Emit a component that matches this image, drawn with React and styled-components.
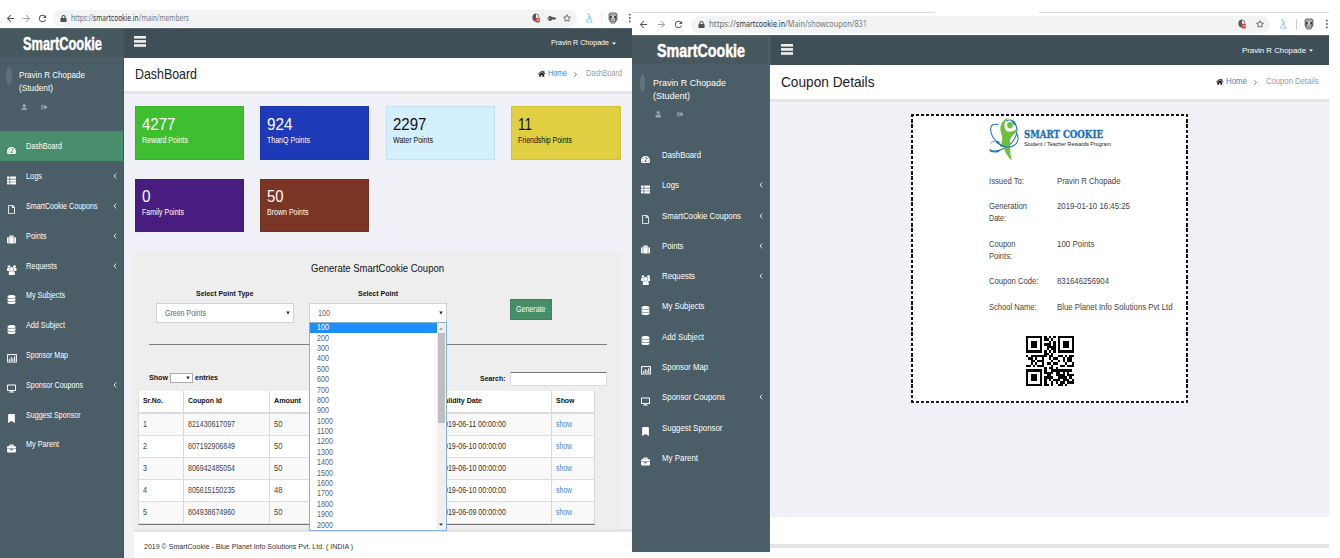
import React, { useLayoutEffect, useRef, useState } from "react";
import styled, { createGlobalStyle } from "styled-components";
import {
  FaTachometerAlt, FaThList, FaRegFile, FaSuitcase, FaDatabase,
  FaDesktop, FaBookmark, FaBriefcase, FaUser, FaSignOutAlt, FaHome, FaLock, FaKey, FaRegStar,
} from "react-icons/fa";
import { MdArrowBack, MdArrowForward, MdRefresh } from "react-icons/md";

const Global = createGlobalStyle`
  *, *::before, *::after { box-sizing: border-box; }
  body { margin: 0; background: #fff; font-family: "Liberation Sans", Arial, sans-serif; overflow: hidden; }
  svg { display: block; }
`;

/* ---------- text set to a given width ---------- */
const FitBox = styled.span`
  display: block;
  flex: none;
  width: ${(p) => p.$w}px;
  height: ${(p) => p.$lh}px;
  line-height: ${(p) => p.$lh}px;
  font-size: ${(p) => p.$size}px;
  font-weight: ${(p) => (p.$bold ? 700 : 400)};
  font-family: ${(p) => p.$font || "inherit"};
  color: ${(p) => p.$color || "inherit"};
  -webkit-text-stroke: ${(p) => p.$stroke || 0}px currentColor;
  white-space: nowrap;
`;
const FitInner = styled.span`
  display: inline-block;
  transform-origin: 0 50%;
`;
function Fit({ w, size = 8.5, lh = 12, bold, color, font, stroke, children }) {
  const ref = useRef(null);
  const [scale, setScale] = useState(1);
  useLayoutEffect(() => {
    setScale(w / ref.current.getBoundingClientRect().width);
  }, []);
  return (
    <FitBox $w={w} $size={size} $lh={lh} $bold={bold} $color={color} $font={font} $stroke={stroke}>
      <FitInner ref={ref} style={{ transform: `scaleX(${scale})` }}>{children}</FitInner>
    </FitBox>
  );
}

/* ---------- page frame ---------- */
const Page = styled.div`
  display: flex;
  width: 1340px;
  height: 558px;
  background: #fff;
`;
const LeftWindow = styled.section`
  width: 632px;
  height: 558px;
  padding-top: 8px;
  display: flex;
  flex-direction: column;
`;
const RightWindow = styled.section`
  width: 697px;
  height: 558px;
  padding-top: 12px;
  display: flex;
  flex-direction: column;
`;
const Columns = styled.div`
  display: flex;
  height: ${(p) => p.$h}px;
`;

/* ---------- browser toolbar ---------- */
const TabEdge = styled.div`
  display: flex;
  justify-content: space-between;
  height: 1px;
`;
const TabLine = styled.i`
  width: ${(p) => p.$w}px;
  background: #d9dbe4;
`;
const Toolbar = styled.div`
  display: flex;
  align-items: center;
  height: ${(p) => p.$h}px;
  padding-left: ${(p) => p.$pad}px;
  color: #50545a;
`;
const NavIcons = styled.div`
  display: flex;
  gap: ${(p) => p.$gap}px;
  width: ${(p) => p.$w}px;
  font-size: 11px;
`;
const Address = styled.div`
  display: flex;
  align-items: center;
  width: ${(p) => p.$w}px;
  height: 17px;
  padding: 0 6px 0 7px;
  border-radius: 9px;
  background: #f1f3f4;
  color: #4b4f54;
`;
const Url = styled.div`
  display: flex;
  margin-left: ${(p) => p.$ml}px;
  margin-right: auto;
`;
const AddressIcons = styled.div`
  display: flex;
  align-items: center;
  gap: ${(p) => p.$gap}px;
`;
const KeyIcon = styled(FaKey)`
  font-size: 7px;
  transform: rotate(-135deg);
`;
const ToolIcons = styled.div`
  display: flex;
  align-items: center;
  margin-left: ${(p) => p.$ml}px;
`;
const Divider = styled.i`
  width: 1px;
  height: 11px;
  margin: 0 ${(p) => p.$mr}px 0 ${(p) => p.$ml}px;
  background: ${(p) => p.$color};
`;

const CookieBlocked = () => (
  <svg width="8" height="10" viewBox="0 0 8 10">
    <path d="M4 .5A3.6 4 0 0 0 4 8.5Z" fill="#56595d" />
    <path d="M3.8.8A3.2 3.8 0 0 1 7 4.5" fill="none" stroke="#777" />
    <rect x="3.6" y="4.8" width="4.2" height="4.6" rx="1" fill="#d8423c" />
    <path d="M4.6 7H7" stroke="#fff" strokeWidth=".8" />
  </svg>
);
const Swirl = () => (
  <svg width="8" height="10" viewBox="0 0 8 10" fill="none">
    <path d="M2 .8C4.6 1 6 4 4.8 6.4" stroke="#7ba7c6" strokeWidth="1" />
    <path d="M3 3C4.6 4 4 6 1 8.6M1.6 9.2H7" stroke="#93d6e6" strokeWidth="1.1" />
    <path d="M5 6.3L7.4 8.8" stroke="#a9c3d6" strokeWidth="1.1" />
  </svg>
);
const Profile = () => (
  <svg width="10" height="12" viewBox="0 0 10 12">
    <path d="M.6 2L2.2.6H7.8L9.4 2V7.6L7 11.6H3L.6 7.6Z" fill="#6d716c" />
    <path d="M2.4 1.6H7.6L8.4 4.4H1.6Z" fill="#a6aaa3" />
    <path d="M3.7 3.4H6.3L6.9 9.8Q5 12 3.1 9.8Z" fill="#cfd2cb" />
    <circle cx="2.9" cy="5" r="1" fill="#2b2e2c" />
    <circle cx="7.1" cy="5" r="1" fill="#2b2e2c" />
    <path d="M3.8 9.4H6.2M5 6.8V8.2" stroke="#444" strokeWidth=".9" />
  </svg>
);
const Dots = () => (
  <svg width="2" height="10" viewBox="0 0 2 10" fill="#4c4f53">
    <rect y="0.8" width="1.6" height="1.6" /><rect y="4.2" width="1.6" height="1.6" /><rect y="7.6" width="1.6" height="1.6" />
  </svg>
);

/* ---------- sidebar ---------- */
const Sidebar = styled.aside`
  flex: none;
  width: ${(p) => p.$w}px;
  background: #4b5d66;
  color: #fff;
  border-right: 1px solid ${(p) => p.$edge};
`;
const Brand = styled.div`
  height: ${(p) => p.$h}px;
  padding: ${(p) => p.$pad};
  background: #47585f;
  border-top: 1px solid #5c6b72;
  border-bottom: 1px solid #4e6068;
`;
const UserBlock = styled.div`
  display: flex;
  height: ${(p) => p.$h}px;
  padding: ${(p) => p.$pad};
`;
const Avatar = styled.i`
  width: 5.5px;
  height: 18px;
  margin-right: ${(p) => p.$mr}px;
  border-radius: 50%;
  background: #62727a;
`;
const UserText = styled.div`
  padding-top: 2px;
`;
const UserLinks = styled.div`
  display: flex;
  gap: ${(p) => p.$gap}px;
  margin: 8.5px 0 0 1.5px;
  font-size: 6.5px;
  color: #9ba3a7;
`;
const Item = styled.div`
  display: flex;
  align-items: center;
  height: ${(p) => p.$h}px;
  padding-left: ${(p) => p.$pad}px;
  padding-right: 6px;
  border-top: 1px solid ${(p) => (p.$active ? "#478d6b" : "#4f616a")};
  background: ${(p) => (p.$active ? "#488e6c" : "transparent")};
`;
const ItemIcon = styled.span`
  width: ${(p) => p.$w}px;
  padding-top: 8px;
  font-size: 9px;
`;
const Chevron = styled.svg`
  margin-left: auto;
`;
const GroupIcon = () => (
  <svg width="9.5" height="10" viewBox="0 0 19 20" fill="currentColor">
    <circle cx="4" cy="3.2" r="2.8" />
    <circle cx="15" cy="3.2" r="2.8" />
    <path d="M0 7Q0 6 2 6H6L5 9L7 12H1.5Q0 12 0 10Z" />
    <path d="M19 7Q19 6 17 6H13L14 9L12 12H17.5Q19 12 19 10Z" />
    <circle cx="9.5" cy="8" r="3.8" />
    <path d="M3.5 19V15Q3.5 12 7 11.8Q9.5 13.6 12 11.8Q15.5 12 15.5 15V19Q15 20 14 20H5Q4 20 3.5 19Z" />
  </svg>
);
const ChartIcon = () => (
  <svg width="10" height="9" viewBox="0 0 10 9">
    <rect x=".6" y=".6" width="8.8" height="7.4" fill="none" stroke="currentColor" strokeWidth="1" />
    <path d="M2.6 7V5M4.3 7V3M6 7V4.2M7.7 7V2.2" stroke="currentColor" strokeWidth="1" />
  </svg>
);

const MENU = [
  ["DashBoard", FaTachometerAlt, 36, 39],
  ["Logs", FaThList, 16, 17, true],
  ["SmartCookie Coupons", FaRegFile, 71.5, 79, true],
  ["Points", FaSuitcase, 20.5, 21.5, true],
  ["Requests", GroupIcon, 31, 33, true],
  ["My Subjects", FaDatabase, 39, 42.5],
  ["Add Subject", FaDatabase, 39, 42],
  ["Sponsor Map", ChartIcon, 42, 46],
  ["Sponsor Coupons", FaDesktop, 57, 63, true],
  ["Suggest Sponsor", FaBookmark, 54.5, 60.5],
  ["My Parent", FaBriefcase, 33, 36],
];

function Menu({ wide }) {
  return MENU.map(([label, Icon, w1, w2, sub], i) => (
    <Item key={label} $h={wide ? 30.27 : 29.8} $pad={wide ? 8.5 : 7} $active={!wide && i === 0}>
      <ItemIcon $w={wide ? 21 : 19}><Icon /></ItemIcon>
      <Fit w={wide ? w2 : w1} size={8.7}>{label}</Fit>
      {sub && (
        <Chevron width="4" height="6" viewBox="0 0 4 6"><path d="M3.2.6L1 3L3.2 5.4" fill="none" stroke="#e4e8ea" /></Chevron>
      )}
    </Item>
  ));
}

/* ---------- header + title ---------- */
const Main = styled.main`
  flex: 1;
  min-width: 0;
  display: flex;
  flex-direction: column;
  background: #f0f1f6;
`;
const TopBar = styled.div`
  display: flex;
  align-items: center;
  justify-content: space-between;
  height: ${(p) => p.$h}px;
  padding: 0 16px 0 ${(p) => p.$pad}px;
  background: #404f57;
  border-top: 1px solid #56646b;
  color: #fff;
`;
const Account = styled.div`
  display: flex;
  align-items: center;
  gap: 3px;
`;
const TitleBar = styled.div`
  display: flex;
  align-items: center;
  justify-content: space-between;
  height: ${(p) => p.$h}px;
  padding: ${(p) => p.$pad};
  background: #fff;
  border-bottom: 3px solid #e5e6e7;
  color: #222;
`;
const Crumbs = styled.div`
  display: flex;
  align-items: center;
  font-size: 7.5px;
`;
const CrumbArrow = styled.svg`
  margin: 0 9px 0 7px;
`;
const BurgerIcon = styled.svg`
  margin-bottom: 3px;
`;
const Burger = () => (
  <BurgerIcon width="12" height="11" viewBox="0 0 12 11" fill="#eef0f1">
    <rect width="12" height="2.6" y="0" /><rect width="12" height="2.6" y="4.1" /><rect width="12" height="2.6" y="8.2" />
  </BurgerIcon>
);
function Header({ h, pad, nameW, titleH, titlePad, title, titleW, crumb, crumbW, homeW }) {
  return (
    <>
      <TopBar $h={h} $pad={pad}>
        <Burger />
        <Account>
          <Fit w={nameW} size={8}>Pravin R Chopade</Fit>
          <svg width="4" height="3" viewBox="0 0 4 3"><path d="M0 .5H4L2 2.7Z" fill="#fff" /></svg>
        </Account>
      </TopBar>
      <TitleBar $h={titleH} $pad={titlePad}>
        <Fit w={titleW} size={14.5} lh={18}>{title}</Fit>
        <Crumbs>
          <FaHome />
          &nbsp;
          <Fit w={homeW} size={8.2} color="#4a84c4">Home</Fit>
          <CrumbArrow width="3" height="5" viewBox="0 0 3 5"><path d="M.5.5L2.5 2.5L.5 4.5" fill="none" stroke="#777" /></CrumbArrow>
          <Fit w={crumbW} size={8.2} color="#999">{crumb}</Fit>
        </Crumbs>
      </TitleBar>
    </>
  );
}

/* ---------- dashboard ---------- */
const Cards = styled.div`
  display: grid;
  grid-template-columns: repeat(4, 109.3px);
  column-gap: 16.3px;
  row-gap: 19px;
  padding: 12.5px 0 0 10.5px;
`;
const Card = styled.div`
  height: 53.5px;
  padding: 7.5px 0 0 6px;
  border: 1px solid rgba(0, 0, 0, 0.06);
  background: ${(p) => p.$bg};
  color: ${(p) => p.$fg};
`;
const CARDS = [
  ["4277", "Reward Points", "#3fbe30", "#fff", 33.5, 46],
  ["924", "ThanQ Points", "#1f3ab8", "#fff", 25.5, 43],
  ["2297", "Water Points", "#d4effe", "#111", 33.5, 40],
  ["11", "Friendship Points", "#dfcf41", "#111", 14, 54],
  ["0", "Family Points", "#491d7f", "#fff", 8.5, 42],
  ["50", "Brown Points", "#7a3525", "#fff", 16.5, 41.5],
];
const Panel = styled.div`
  position: relative;
  width: 488px;
  height: 278px;
  margin: 18.5px 0 0 10px;
  padding: 10px 15.5px 0 14.5px;
  background: #eee;
  color: #111;
`;
const PanelTitle = styled.div`
  display: flex;
  justify-content: center;
`;
const FormRow = styled.div`
  display: flex;
  align-items: flex-start;
  height: 69.5px;
  padding: 12.5px 0 0 7.5px;
  border-bottom: 1.5px solid #7b8079;
`;
const Field = styled.div`
  display: flex;
  flex-direction: column;
  align-items: center;
  gap: 2.5px;
  width: 138px;
  margin-right: 14.5px;
`;
const Select = styled.div`
  display: flex;
  align-items: center;
  justify-content: space-between;
  width: 138px;
  height: 20px;
  padding: 0 3px 0 8px;
  background: #fff;
  border: 1px solid #d2d2d2;
`;
const Caret = () => (
  <svg width="4" height="4" viewBox="0 0 4 4"><path d="M.3 .5H3.7L2 3.6Z" fill="#222" /></svg>
);
const Button = styled.button`
  display: flex;
  justify-content: center;
  align-items: center;
  width: 42px;
  height: 21px;
  margin: 10.5px 0 0 48.5px;
  padding: 0;
  border: 1px solid #3d805f;
  background: #478d6a;
  color: #fff;
  font-family: inherit;
`;
const TableTools = styled.div`
  display: flex;
  align-items: flex-end;
  justify-content: space-between;
  height: 42.5px;
  padding-bottom: 1.5px;
`;
const ToolGroup = styled.div`
  display: flex;
  align-items: center;
  gap: 2px;
  margin-bottom: ${(p) => p.$mb}px;
`;
const LengthSelect = styled.div`
  display: flex;
  align-items: center;
  justify-content: flex-end;
  width: 23.5px;
  height: 10px;
  padding-right: 2px;
  border: 1px solid #aaa;
  background: #fff;
`;
const SearchInput = styled.div`
  width: 97px;
  height: 14px;
  margin-left: 2px;
  border: 1px solid #ddd;
  border-top-color: #777;
  background: #fff;
`;
const Table = styled.div`
  width: 457.5px;
  margin: 3.5px 0 0 -11px;
  border-left: 1px solid #ddd;
  border-bottom: 1.5px solid #777;
`;
const Row = styled.div`
  display: grid;
  grid-template-columns: 45px 86px 40px 126.5px 115.5px 43.5px;
  height: ${(p) => (p.$head ? 22.5 : 22.1)}px;
  background: ${(p) => (p.$odd ? "#f9f9f9" : "#fff")};
  border-bottom: ${(p) => (p.$head ? 2 : 1)}px solid #dcdcdc;
`;
const Cell = styled.div`
  display: flex;
  align-items: center;
  padding-left: 4px;
  border-right: 1px solid #d8d8d8;
`;
const HeadCell = styled(Cell)`
  padding-bottom: 1px;
`;
const ROWS = [
  ["821430617097", "50", "2019-06-11 00:00:00"],
  ["807192906849", "50", "2019-06-10 00:00:00"],
  ["806942485054", "50", "2019-06-10 00:00:00"],
  ["805615150235", "48", "2019-06-10 00:00:00"],
  ["804938674960", "50", "2019-06-09 00:00:00"],
];
const Dropdown = styled.div`
  position: absolute;
  left: 174.5px;
  top: 71px;
  display: flex;
  width: 138px;
  height: 209.5px;
  border: 1px solid #8cb0dc;
  background: #fff;
  z-index: 2;
`;
const Options = styled.div`
  flex: 1;
`;
const Option = styled.div`
  display: flex;
  align-items: center;
  height: 10.4px;
  padding-left: 7.5px;
  background: ${(p) => (p.$on ? "#1e8fff" : "transparent")};
  color: ${(p) => (p.$on ? "#fff" : "#5d6166")};
`;
const Scroll = styled.div`
  display: flex;
  flex-direction: column;
  align-items: center;
  justify-content: space-between;
  width: 9px;
  padding: 4px 0;
  background: #f0f0f0;
`;
const Thumb = styled.i`
  width: 7px;
  height: 90px;
  margin: 3px 0 auto;
  background: #bfbfbf;
`;
const Footer = styled.footer`
  flex: 1;
  margin-left: 10px;
  padding: 9px 0 0 9.5px;
  border-top: 3px solid #e4e4e5;
  background: #fff;
  color: #333;
`;

function Dashboard() {
  return (
    <LeftWindow>
      <Toolbar $h={20} $pad={4.5}>
        <NavIcons $gap={5} $w={48.5}>
          <MdArrowBack /><MdArrowForward color="#a4a7aa" /><MdRefresh />
        </NavIcons>
        <Address $w={524}>
          <FaLock size={7} />
          <Url $ml={3.5}>
            <Fit w={22.5} size={8} font="Noto Sans, sans-serif" color="#777b80">https://</Fit>
            <Fit w={45.5} size={8} font="Noto Sans, sans-serif" color="#303438">smartcookie.in</Fit>
            <Fit w={50} size={8} font="Noto Sans, sans-serif" color="#777b80">/main/members</Fit>
          </Url>
          <AddressIcons $gap={8}>
            <CookieBlocked /><KeyIcon /><FaRegStar size={8} />
          </AddressIcons>
        </Address>
        <ToolIcons $ml={8}>
          <Swirl /><Divider $ml={8} $mr={6} $color="#eee" /><Profile /><Divider $ml={6} $mr={4} $color="transparent" /><Dots />
        </ToolIcons>
      </Toolbar>
      <Columns $h={530}>
        <Sidebar $w={124} $edge="#43545c">
          <Brand $h={30} $pad="5px 0 0 22.5px"><Fit w={79} size={17.5} lh={20} bold stroke={0.5}>SmartCookie</Fit></Brand>
          <UserBlock $h={73} $pad="9px 0 0 6px">
            <Avatar $mr={7.5} />
            <UserText>
              <Fit w={66} size={9.3} lh={13.2}>Pravin R Chopade</Fit>
              <Fit w={34} size={9.3} lh={13.2}>(Student)</Fit>
              <UserLinks $gap={14}><FaUser /><FaSignOutAlt /></UserLinks>
            </UserText>
          </UserBlock>
          <Menu />
        </Sidebar>
        <Main>
          <Header h={29.5} pad={10} nameW={58} titleH={36} titlePad="0 10px 0 10.5px" title="DashBoard" titleW={62} crumb="DashBoard" crumbW={36} homeW={19} />
          <Cards>
            {CARDS.map(([n, label, bg, fg, nw, lw]) => (
              <Card key={label} $bg={bg} $fg={fg}>
                <Fit w={nw} size={16.8} lh={19}>{n}</Fit>
                <Fit w={lw} size={8.3} lh={12}>{label}</Fit>
              </Card>
            ))}
          </Cards>
          <Panel>
            <PanelTitle><Fit w={133} size={11.3} lh={15}>Generate SmartCookie Coupon</Fit></PanelTitle>
            <FormRow>
              <Field>
                <Fit w={57.5} size={8} bold>Select Point Type</Fit>
                <Select><Fit w={41} color="#666">Green Points</Fit><Caret /></Select>
              </Field>
              <Field>
                <Fit w={40} size={8} bold>Select Point</Fit>
                <Select><Fit w={12} color="#666">100</Fit><Caret /></Select>
              </Field>
              <Button><Fit w={29.5} size={8.4}>Generate</Fit></Button>
            </FormRow>
            <TableTools>
              <ToolGroup $mb={2}>
                <Fit w={19} size={8} bold>Show</Fit>
                <LengthSelect><Caret /></LengthSelect>
                <Fit w={23} size={8} bold>entries</Fit>
              </ToolGroup>
              <ToolGroup $mb={0}>
                <Fit w={25.5} size={8} bold>Search:</Fit>
                <SearchInput />
              </ToolGroup>
            </TableTools>
            <Table>
              <Row $head>
                <HeadCell><Fit w={20} size={7.8} bold>Sr.No.</Fit></HeadCell>
                <HeadCell><Fit w={34} size={7.8} bold>Coupon Id</Fit></HeadCell>
                <HeadCell><Fit w={27} size={7.8} bold>Amount</Fit></HeadCell>
                <HeadCell />
                <HeadCell><Fit w={42} size={7.8} bold>Validity Date</Fit></HeadCell>
                <HeadCell><Fit w={18.5} size={7.8} bold>Show</Fit></HeadCell>
              </Row>
              {ROWS.map(([id, amount, date], i) => (
                <Row key={id} $odd={i % 2 === 0}>
                  <Cell><Fit w={4} size={8.4} color="#444">{i + 1}</Fit></Cell>
                  <Cell><Fit w={47} size={8.4} color="#444">{id}</Fit></Cell>
                  <Cell><Fit w={8.5} size={8.4} color="#444">{amount}</Fit></Cell>
                  <Cell />
                  <Cell><Fit w={66} size={8.4} color="#333">{date}</Fit></Cell>
                  <Cell><Fit w={16} size={8.4} color="#4a88c8">show</Fit></Cell>
                </Row>
              ))}
            </Table>
            <Dropdown>
              <Options>
                {Array.from({ length: 20 }, (_, i) => (
                  <Option key={i} $on={i === 0}><Fit w={i < 9 ? 12 : 16} size={8.2} lh={9}>{(i + 1) * 100}</Fit></Option>
                ))}
              </Options>
              <Scroll>
                <svg width="4" height="3" viewBox="0 0 4 3"><path d="M0 2.7H4L2 .5Z" fill="#999" /></svg>
                <Thumb />
                <svg width="4" height="3" viewBox="0 0 4 3"><path d="M0 .5H4L2 2.7Z" fill="#333" /></svg>
              </Scroll>
            </Dropdown>
          </Panel>
          <Footer><Fit w={209} size={8}>2019 © SmartCookie - Blue Planet Info Solutions Pvt. Ltd. ( INDIA )</Fit></Footer>
        </Main>
      </Columns>
    </LeftWindow>
  );
}

/* ---------- coupon details ---------- */
const CouponArea = styled.div`
  height: 415px;
  padding: 12px 0 0 141px;
`;
const Coupon = styled.div`
  width: 277px;
  height: 289px;
  padding: 3px 0 0 78px;
  background:
    repeating-linear-gradient(90deg, #111 0 3.3px, #fff 3.3px 5px) 0 0 / 100% 2px no-repeat,
    repeating-linear-gradient(90deg, #222 0 3.3px, #fff 3.3px 5px) 0 100% / 100% 2.5px no-repeat,
    repeating-linear-gradient(180deg, #111 0 3.4px, #fff 3.4px 5.2px) 0 0 / 2px 100% no-repeat,
    repeating-linear-gradient(180deg, #111 0 3.4px, #fff 3.4px 5.2px) 100% 0 / 2px 100% no-repeat,
    #fff;
`;
const LogoRow = styled.div`
  display: flex;
  height: 57.5px;
  gap: 4.5px;
`;
const LogoText = styled.div`
  padding-top: 11px;
`;
const Detail = styled.div`
  display: flex;
  height: ${(p) => p.$h}px;
`;
const DetailLabel = styled.div`
  width: 68px;
`;
const DETAILS = [
  [25.7, [["Issued To:", 35]], "Pravin R Chopade", 63.5],
  [37.6, [["Generation", 38], ["Date:", 17]], "2019-01-10 16:45:25", 73],
  [37.6, [["Coupon", 26.5], ["Points:", 23]], "100 Points", 37.5],
  [25.7, [["Coupon Code:", 49.5]], "831646256904", 52],
  [35, [["School Name:", 47.5]], "Blue Planet Info Solutions Pvt Ltd", 115.5],
];
const QrHolder = styled.div`
  padding-left: 37px;
`;
const BottomGap = styled.div`
  flex: 1;
  background: #fff;
  padding-top: 27px;
`;
const BottomLine = styled.div`
  height: 4px;
  background: #e4e4e5;
`;

const Logo = () => (
  <svg width="30" height="44" viewBox="0 0 30 44" fill="none">
    <path d="M9.5 7.5C3 6.5 1 9 1.8 14C2.8 21 10 29.5 19 30C25 30.2 29.5 26 29 20.5C28.6 18 28 17 27 16" stroke="#2177bd" strokeWidth="1.1" />
    <path d="M1 33.5C10 36 21 30 26 21C30 13 27 3 20.5 3C19.5 3 18 3.5 17 4.5" stroke="#2177bd" strokeWidth="1.1" />
    <path d="M.6 31.8Q5 35.8 10.5 33.2L10 34.9Q5 36.2 .8 34.2Z" fill="#2177bd" />
    <path d="M21 2.2L26.4 5.2L25.6 8.8L23 5Z" fill="#2177bd" />
    <path d="M1.8 26.5C3 24 7 23 11 26" stroke="#4b91ca" strokeWidth="1" />
    <circle cx="8.6" cy="25.4" r="1.4" fill="#2177bd" />
    <path d="M21 .5C15 3 14 9 17 13.5C20 16 25 14 29.4 11.8C26.5 16.5 22.4 19 21.4 22C20.4 28 20.6 34 22.8 43.6C18 39 15.6 34 15 30.5L10.8 29.5C14 24.5 13.8 20 12 16C9.8 9 13.5 1.5 21 .5Z" fill="#70bf3c" />
    <ellipse cx="21" cy="8.3" rx="2.8" ry="3.2" fill="#70bf3c" />
    <path d="M9 26.5C13 29.5 17 30.2 21 30" stroke="#2177bd" strokeWidth="1.1" />
  </svg>
);

const QR = [
  "111111101010101111111",
  "100000101101001000001",
  "101110100010101011101",
  "101110101110101011101",
  "101110100111101011101",
  "100000100101101000001",
  "111111101010101111111",
  "000000001101000000000",
  "101111111011001101011",
  "011010010010110010110",
  "001101110001001010110",
  "001010010110110001001",
  "110101110001000110111",
  "000000001011010000000",
  "111111101001111111110",
  "100000101111011010100",
  "101110100110011110111",
  "101110101111001111010",
  "101110101010111011101",
  "100000101001010110111",
  "111111101101001101000",
];
const QrCode = () => (
  <svg width="48" height="50" viewBox="0 0 21 21" preserveAspectRatio="none" shapeRendering="crispEdges" fill="#050505">
    {QR.flatMap((line, y) => [...line].map((c, x) => (c === "1" ? <rect key={`${x}-${y}`} x={x} y={y} width="1" height="1" /> : null)))}
  </svg>
);

function CouponDetails() {
  return (
    <RightWindow>
      <TabEdge><TabLine $w={303} /><TabLine $w={290} /></TabEdge>
      <Toolbar $h={22} $pad={6}>
        <NavIcons $gap={6.5} $w={53}>
          <MdArrowBack /><MdArrowForward color="#a4a7aa" /><MdRefresh />
        </NavIcons>
        <Address $w={579}>
          <FaLock size={7} />
          <Url $ml={4}>
            <Fit w={27} size={8} font="Noto Sans, sans-serif" color="#6c7075">https://</Fit>
            <Fit w={49} size={8} font="Noto Sans, sans-serif" color="#303438">smartcookie.in</Fit>
            <Fit w={82} size={8} font="Noto Sans, sans-serif" color="#777b80">/Main/showcoupon/831</Fit>
          </Url>
          <AddressIcons $gap={10}><CookieBlocked /><FaRegStar size={8} /></AddressIcons>
        </Address>
        <ToolIcons $ml={9}>
          <Swirl /><Divider $ml={9} $mr={7} $color="#ccc" /><Profile /><Divider $ml={6} $mr={5} $color="transparent" /><Dots />
        </ToolIcons>
      </Toolbar>
      <Columns $h={517}>
        <Sidebar $w={138} $edge="#55666e">
          <Brand $h={30} $pad="4.5px 0 0 24.5px"><Fit w={88} size={17.5} lh={20} bold stroke={0.5}>SmartCookie</Fit></Brand>
          <UserBlock $h={74.5} $pad="9px 0 0 7.5px">
            <Avatar $mr={8} />
            <UserText>
              <Fit w={73} size={9.5} lh={13.3}>Pravin R Chopade</Fit>
              <Fit w={37} size={9.5} lh={13.3}>(Student)</Fit>
              <UserLinks $gap={16}><FaUser /><FaSignOutAlt /></UserLinks>
            </UserText>
          </UserBlock>
          <Menu wide />
        </Sidebar>
        <Main>
          <Header h={30} pad={10.5} nameW={64} titleH={37} titlePad="0 10.5px 0 11px" title="Coupon Details" titleW={93.5} crumb="Coupon Details" crumbW={52.5} homeW={21} />
          <CouponArea>
            <Coupon>
              <LogoRow>
                <Logo />
                <LogoText>
                  <Fit w={79} size={11.5} lh={12.5} bold stroke={0.4} font="'DejaVu Serif', serif" color="#1b74bb">SMART COOKIE</Fit>
                  <Fit w={87} size={6} lh={7} color="#222">Student / Teacher Rewards Program</Fit>
                </LogoText>
              </LogoRow>
              {DETAILS.map(([h, lines, value, vw]) => (
                <Detail key={value} $h={h}>
                  <DetailLabel>
                    {lines.map(([t, w]) => <Fit key={t} w={w} size={8.6} lh={12} color="#444">{t}</Fit>)}
                  </DetailLabel>
                  <Fit w={vw} size={8.6} lh={12} color="#444">{value}</Fit>
                </Detail>
              ))}
              <QrHolder><QrCode /></QrHolder>
            </Coupon>
          </CouponArea>
          <BottomGap><BottomLine /></BottomGap>
        </Main>
      </Columns>
    </RightWindow>
  );
}

export default function App() {
  return (
    <>
      <Global />
      <Page>
        <Dashboard />
        <CouponDetails />
      </Page>
    </>
  );
}
